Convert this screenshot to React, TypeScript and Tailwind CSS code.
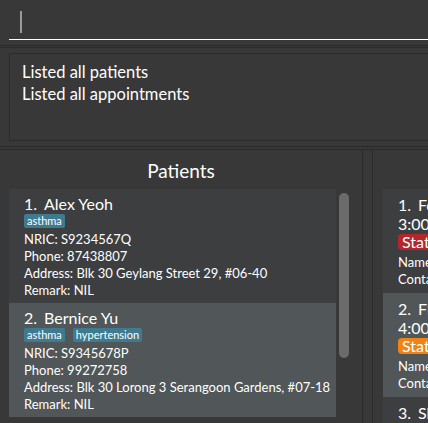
const patients = [
    {
        id: 1,
        name: "Alex Yeoh",
        tags: ["asthma"],
        nric: "S9234567Q",
        phone: "87438807",
        address: "Blk 30 Geylang Street 29, #06-40",
        remark: "NIL",
    },
    {
        id: 2,
        name: "Bernice Yu",
        tags: ["asthma", "hypertension"],
        nric: "S9345678P",
        phone: "99272758",
        address: "Blk 30 Lorong 3 Serangoon Gardens, #07-18",
        remark: "NIL",
    },
];

const appointments = [
    { id: 1, title: "Follow-up consultation", time: "3:00 PM, 12 Mar 2024", status: "Status: Cancelled", badge: "bg-[#b3262a]", name: "Alex Yeoh", contact: "87438807" },
    { id: 2, title: "Flu vaccination", time: "4:00 PM, 14 Mar 2024", status: "Status: Pending", badge: "bg-[#ef8414]", name: "Bernice Yu", contact: "99272758" },
    { id: 3, title: "Skin check", time: "10:00 AM, 18 Mar 2024", status: "Status: Completed", badge: "bg-[#3a8f3a]", name: "Charlotte Oliveiro", contact: "93210283" },
];

const PatientCard = ({ p, index }: { p: typeof patients[number]; index: number }) => (
    <div className={`h-[114px] pl-[15px] pt-[6px] text-white ${index % 2 === 0 ? "bg-[#3c3e3f]" : "bg-[#515658]"}`}>
        <div className="flex text-[16px] leading-[18px]">
            <span className="w-[20px]">{p.id}.</span>
            <span>{p.name}</span>
        </div>
        <div className="mt-[1px] flex gap-[8px]">
            {p.tags.map((t) => (
                <span key={t} className="h-[14px] rounded-[2px] bg-[#3e7b91] px-[3px] text-[11px] leading-[14px]">
                    {t}
                </span>
            ))}
        </div>
        <div className="mt-[3px] text-[13px] leading-[17px]">
            <div>NRIC: {p.nric}</div>
            <div>Phone: {p.phone}</div>
            <div className="whitespace-nowrap">Address: {p.address}</div>
            <div>Remark: {p.remark}</div>
        </div>
    </div>
);

const AppointmentCard = ({ a, index }: { a: typeof appointments[number]; index: number }) => (
    <div className={`h-[104px] pl-[15px] pt-[6px] text-white whitespace-nowrap ${index % 2 === 0 ? "bg-[#3c3e3f]" : "bg-[#515658]"}`}>
        <div className="flex text-[16px] leading-[19px]">
            <span className="w-[20px]">{a.id}.</span>
            <span>{a.title}</span>
        </div>
        <div className="text-[16px] leading-[19px]">{a.time}</div>
        <div className="mt-[1px] flex">
            <span className={`h-[16px] rounded-[4px] px-[4px] text-[16px] leading-[16px] ${a.badge}`}>{a.status}</span>
        </div>
        <div className="mt-[4px] text-[13px] leading-[17px]">
            <div>Name: {a.name}</div>
            <div>Contact: {a.contact}</div>
        </div>
    </div>
);

const App = () => {
    return (
        <div className="h-[423px] w-[428px] overflow-hidden bg-[#383838] font-['Lato',sans-serif]">
            <div className="flex w-[760px] flex-col">
                {/* command box */}
                <div className="pl-[9px]">
                    <div className="h-[40px] border-b border-white pl-[11px] pt-[11px]">
                        <div className="h-[22px] w-[2px] bg-[#9a9a9a]" />
                    </div>
                </div>
                <div className="mt-[5px] h-[3px] border-y border-[#2b2b2b]" />

                {/* result display */}
                <div className="mt-[5px] pl-[9px]">
                    <div className="h-[88px] border border-[#2b2b2b] pl-[12px] pt-[7px] text-[16.5px] leading-[22px] text-white">
                        <div>Listed all patients</div>
                        <div>Listed all appointments</div>
                    </div>
                </div>
                <div className="mt-[5px] h-[4px] border-y border-[#2b2b2b]" />

                {/* lists */}
                <div className="flex h-[300px]">
                    <div className="w-[362px] shrink-0 pt-[9px]">
                        <div className="text-center text-[19px] leading-[24px] text-white">Patients</div>
                        <div className="mt-[6px] flex gap-[3px] pl-[9px]">
                            <div className="w-[327px]">
                                {patients.map((p, i) => (
                                    <PatientCard key={p.id} p={p} index={i} />
                                ))}
                            </div>
                            <div className="mt-[4px] h-[165px] w-[10px] rounded-full bg-[#6b6b6b]" />
                        </div>
                    </div>
                    <div className="w-px bg-[#2b2b2b]" />
                    <div className="w-[9px]" />
                    <div className="w-px bg-[#2b2b2b]" />
                    <div className="flex-1 pl-[10px] pt-[9px]">
                        <div className="text-center text-[19px] leading-[24px] text-white">Appointments</div>
                        <div className="mt-[6px]">
                            {appointments.map((a, i) => (
                                <AppointmentCard key={a.id} a={a} index={i} />
                            ))}
                        </div>
                    </div>
                </div>
            </div>
        </div>
    );
};

export default App;
